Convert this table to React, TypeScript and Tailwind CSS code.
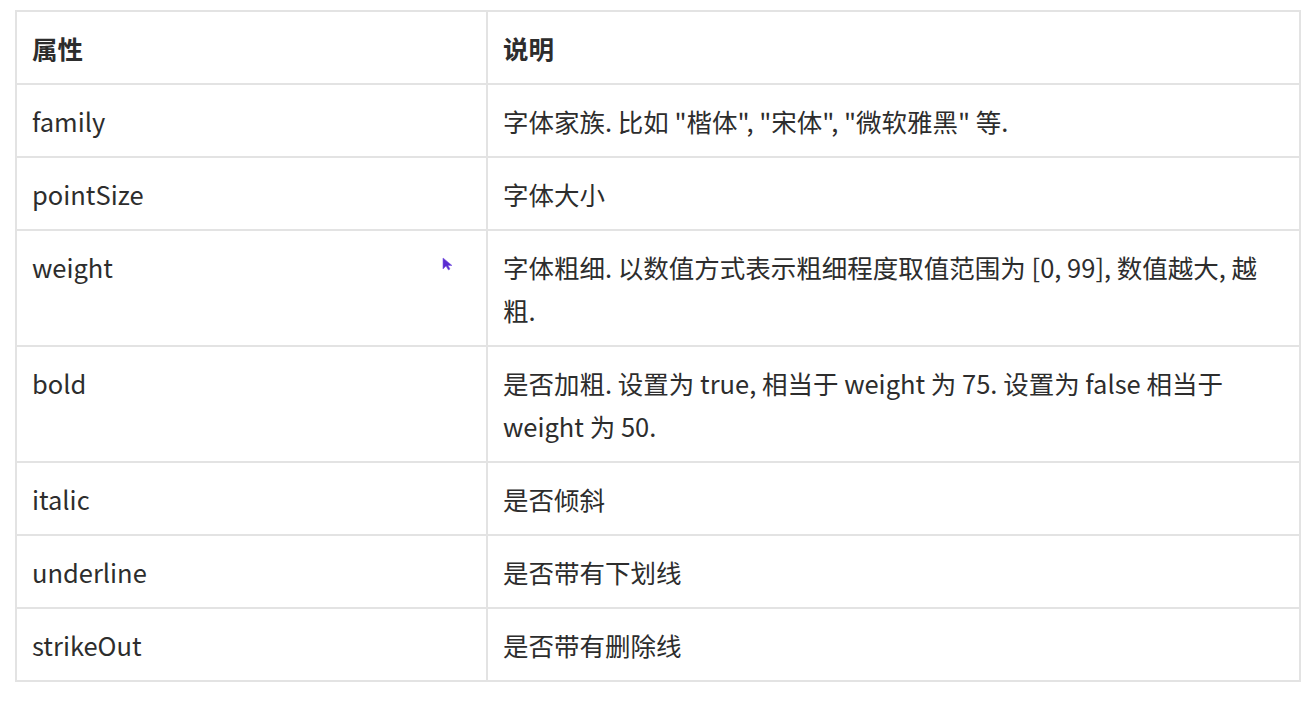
interface FontProp {
  name: string
  desc: string[]
}

const props: FontProp[] = [
  { name: "family", desc: ['字体家族. 比如 "楷体", "宋体", "微软雅黑" 等.'] },
  { name: "pointSize", desc: ["字体大小"] },
  { name: "weight", desc: ["字体粗细. 以数值方式表示粗细程度取值范围为 [0, 99], 数值越大, 越", "粗."] },
  { name: "bold", desc: ["是否加粗. 设置为 true, 相当于 weight 为 75. 设置为 false 相当于", "weight 为 50."] },
  { name: "italic", desc: ["是否倾斜"] },
  { name: "underline", desc: ["是否带有下划线"] },
  { name: "strikeOut", desc: ["是否带有删除线"] },
]

function Cursor() {
  return (
    <svg className="absolute left-[441px] top-[257px]" width="12" height="14" viewBox="0 0 12 14">
      <path d="M2 1 L2 12 L5 9 L7.5 13 L9 12 L7 8.5 L11 8.5 Z" fill="#5a2bd1" stroke="#7c5ce0" strokeWidth="0.6" />
    </svg>
  )
}

export default function App() {
  return (
    <div className="relative h-[704px] w-[1308px] bg-white pl-[15px] pt-[10px] font-['Noto_Sans_CJK_SC','Noto_Sans',sans-serif] text-[25.5px] leading-[43px] text-[#2d2d2d]">
      <table className="w-[1286px] table-fixed border-collapse border-2 border-[#e3e3e3]">
        <colgroup>
          <col className="w-[471px]" />
          <col />
        </colgroup>
        <thead>
          <tr>
            <th className="border-2 border-[#e3e3e3] px-[15px] py-[14px] text-left font-bold">属性</th>
            <th className="border-2 border-[#e3e3e3] px-[15px] py-[14px] text-left font-bold">说明</th>
          </tr>
        </thead>
        <tbody>
          {props.map((p) => (
            <tr key={p.name}>
              <td className="border-2 border-[#e3e3e3] px-[15px] py-[14px] align-top">{p.name}</td>
              <td className="border-2 border-[#e3e3e3] px-[15px] py-[14px] align-top">
                {p.desc.map((line, i) => (
                  <div key={i} className="whitespace-nowrap">{line}</div>
                ))}
              </td>
            </tr>
          ))}
        </tbody>
      </table>
      <Cursor />
    </div>
  )
}
